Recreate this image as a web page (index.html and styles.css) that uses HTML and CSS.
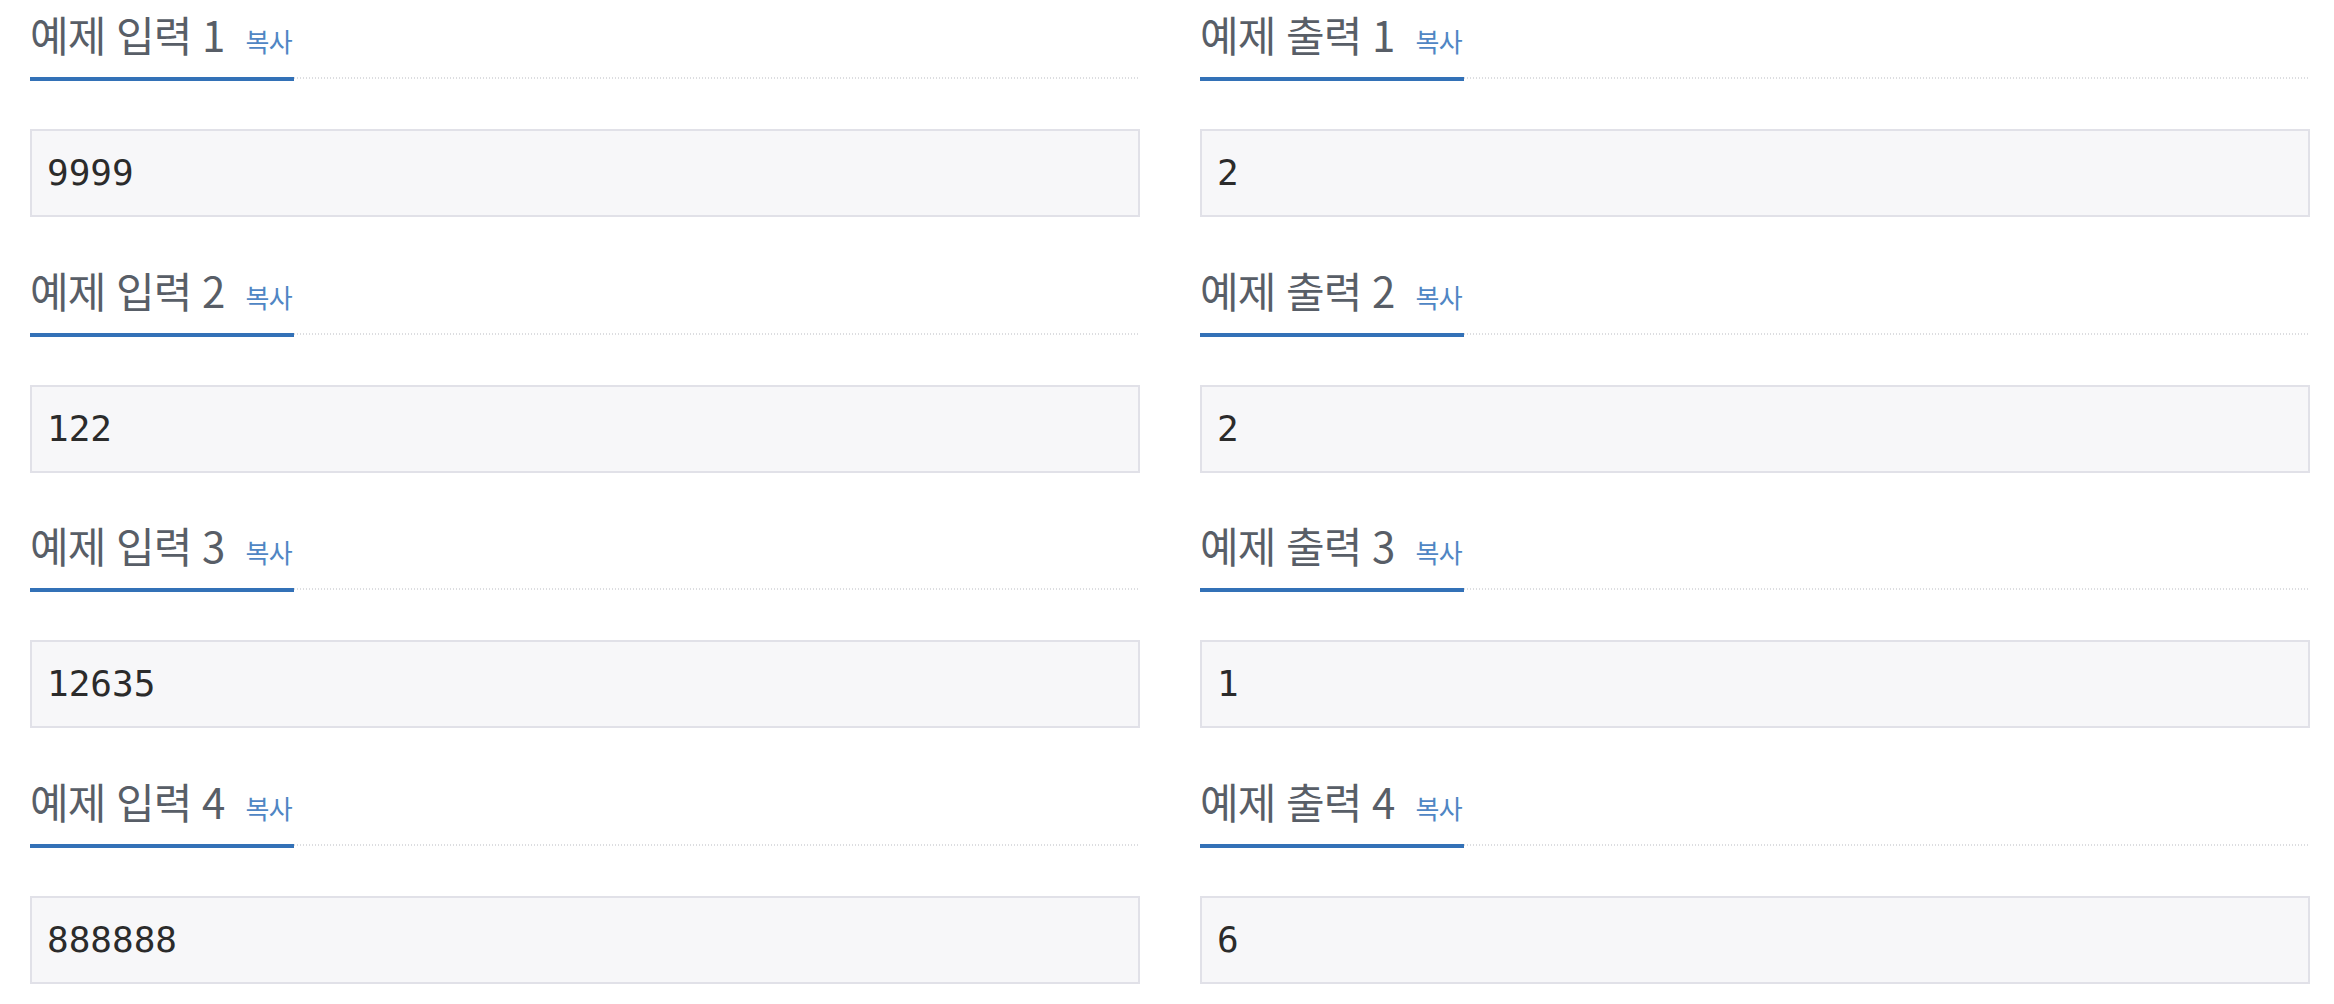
FILE: index.html
```html
<!DOCTYPE html>
<html lang="ko">
<head>
<meta charset="utf-8">
<title>예제</title>
<link rel="stylesheet" href="styles.css">
</head>
<body>
<div class="samples">
  <section class="sample">
    <div class="headline"><h2><span class="title">예제 입력 1</span><button class="copy">복사</button></h2></div>
    <pre class="sampledata">9999</pre>
  </section>
  <section class="sample">
    <div class="headline"><h2><span class="title">예제 출력 1</span><button class="copy">복사</button></h2></div>
    <pre class="sampledata">2</pre>
  </section>
  <section class="sample">
    <div class="headline"><h2><span class="title">예제 입력 2</span><button class="copy">복사</button></h2></div>
    <pre class="sampledata">122</pre>
  </section>
  <section class="sample">
    <div class="headline"><h2><span class="title">예제 출력 2</span><button class="copy">복사</button></h2></div>
    <pre class="sampledata">2</pre>
  </section>
  <section class="sample">
    <div class="headline"><h2><span class="title">예제 입력 3</span><button class="copy">복사</button></h2></div>
    <pre class="sampledata">12635</pre>
  </section>
  <section class="sample">
    <div class="headline"><h2><span class="title">예제 출력 3</span><button class="copy">복사</button></h2></div>
    <pre class="sampledata">1</pre>
  </section>
  <section class="sample">
    <div class="headline"><h2><span class="title">예제 입력 4</span><button class="copy">복사</button></h2></div>
    <pre class="sampledata">888888</pre>
  </section>
  <section class="sample">
    <div class="headline"><h2><span class="title">예제 출력 4</span><button class="copy">복사</button></h2></div>
    <pre class="sampledata">6</pre>
  </section>
</div>
</body>
</html>
```
FILE: styles.css
```css
html, body {
  margin: 0;
  padding: 0;
  background: #ffffff;
}

.samples {
  display: grid;
  grid-template-columns: 1110px 1110px;
  column-gap: 60px;
  row-gap: 38.5px;
  padding-left: 30px;
}

.sample {
  display: flex;
  flex-direction: column;
}

.headline {
  padding-top: 4px;
  background-image: repeating-linear-gradient(90deg, #dcdde0 0 1.5px, transparent 1.5px 3px);
  background-size: 100% 2px;
  background-position: 0 77px;
  background-repeat: no-repeat;
}

.headline h2 {
  display: inline-block;
  margin: 0;
  padding-bottom: 13px;
  border-bottom: 4px solid #3371b7;
  font-family: "Noto Sans CJK KR", sans-serif;
  font-weight: 400;
  font-size: 42px;
  line-height: 60px;
  color: #585e67;
  white-space: nowrap;
}

.title {
  letter-spacing: -1px;
}

.copy {
  margin: 0 0 0 21px;
  padding: 0 2px 0 0;
  border: 0;
  background: none;
  font-family: "Noto Sans CJK KR", sans-serif;
  font-size: 26px;
  letter-spacing: -0.5px;
  color: #4f86c4;
  vertical-align: baseline;
}

.sampledata {
  margin: 48px 0 0 0;
  padding: 21px 15px;
  border: 2px solid #e1e1e8;
  background: #f7f7f9;
  font-family: "DejaVu Sans Mono", monospace;
  font-size: 36px;
  line-height: 42px;
  color: #2b2b2b;
}
```
